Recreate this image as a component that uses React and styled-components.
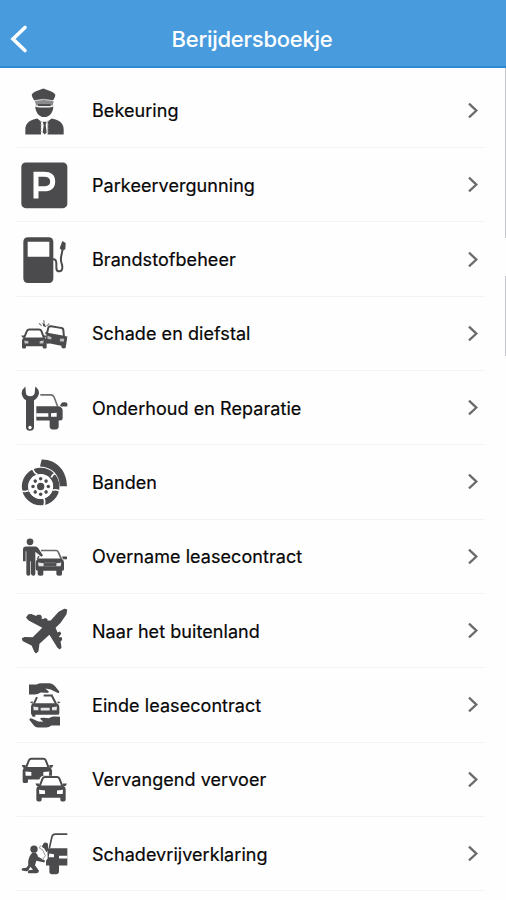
import React from 'react';
import styled, { createGlobalStyle } from 'styled-components';

const GlobalStyle = createGlobalStyle`
  * {
    box-sizing: border-box;
  }

  body {
    background: #fefefe;
    margin: 0;
    overflow: hidden;
  }
`;

const Screen = styled.div`
  color: #060606;
  font-family: Inter, 'Liberation Sans', sans-serif;
  height: 900px;
  overflow: hidden;
  position: relative;
  width: 506px;
`;

const Header = styled.header`
  align-items: center;
  background: #489bdc;
  border-bottom: 2px solid #2d8bd2;
  display: grid;
  grid-template-columns: 60px 1fr 60px;
  height: 68px;
  padding-top: 12px;
`;

const BackButton = styled.button`
  background: none;
  border: 0;
  display: flex;
  height: 32px;
  padding: 0 0 0 8px;
`;

const Title = styled.h1`
  color: #fff;
  font-size: 22px;
  font-weight: 500;
  letter-spacing: -0.25px;
  line-height: 28px;
  margin: 0;
  padding-right: 2px;
  text-align: center;
`;

const List = styled.ul`
  list-style: none;
  margin: 0;
  padding: 5.7px 0 0;
`;

const Row = styled.li`
  align-items: center;
  display: grid;
  grid-template-columns: 72px 1fr 16px;
  height: 74.33px;
  margin: 0 20px 0 10px;
  padding: 0 6px 0 0;
  position: relative;

  &::after {
    background: #f3f3f3;
    bottom: 0;
    content: '';
    height: 1px;
    left: 7px;
    position: absolute;
    right: 1px;
  }
`;

const Label = styled.span`
  -webkit-text-stroke: 0.2px #060606;
  font-size: 18px;
  letter-spacing: 0.06px;
  line-height: 24px;
  padding: 1px 0 0 10px;
  white-space: nowrap;
`;

const IconSvg = styled.svg`
  display: block;
  height: 70px;
  width: 70px;
`;

const ChevronSvg = styled.svg`
  display: block;
  height: 18px;
  justify-self: end;
  width: 14px;
`;

const ScrollMark = styled.div`
  background: #c4c5c8;
  height: ${props => props.size}px;
  position: absolute;
  right: 0;
  top: ${props => props.offset}px;
  width: 1px;
`;

const DARK = '#4b4b4d';

const Icon = ({ shift = 0, children }) => (
  <IconSvg viewBox={`0 ${shift} 210 210`} fill={DARK} aria-hidden="true">
    {children}
  </IconSvg>
);

const OfficerIcon = () => (
  <Icon shift={2.7}>
    <path d="M65 59q5-9 23-14l12-5 12 5q18 5 24 14 0 8-6 16H72q-6-8-7-16z" />
    <path d="M75 78q26-7 56 0l-3 13H78z" fill="#8b8b8d" />
    <path d="M72 77q28-9 58 0" fill="none" stroke="#ccc" strokeWidth="3" />
    <path d="M76 94q7 3 14 3h26q7 0 14-3c0 17-11 32-27 32S76 111 76 94z" />
    <path d="M84 90h38" stroke={DARK} strokeWidth="6" />
    <path d="M46 178v-15c0-16 9-25 24-30l12-3 11 9v39zM161 178v-15c0-16-9-25-24-30l-12-3-12 9v39z" />
    <path d="M98 140h12l-3 10 3 22-6 6-6-6 3-22z" />
    <path d="M94 137v40M113 137v40" stroke="#c4c4c6" strokeWidth="4" strokeDasharray="5 5" />
  </Icon>
);

const ParkingIcon = () => (
  <Icon shift={0.6}>
    <rect x="34" y="38" width="138" height="137" rx="13" />
    <path
      d="M78 146V73h24c17 0 26 8 26 22s-9 22-26 22H79"
      fill="none"
      stroke="#fff"
      strokeWidth="15"
    />
  </Icon>
);

const FuelIcon = () => (
  <Icon>
    <path
      d="M54 37h62q14 0 14 14v109q0 14-14 14H54q-14 0-14-14V51q0-14 14-14zM53 50v45h65V50z"
      fillRule="evenodd"
    />
    <path
      d="M128 103q11-2 11 12v13q0 11 9 11t9-12q0-7-3-15-3-9 1-24l6-34"
      fill="none"
      stroke={DARK}
      strokeWidth="6"
    />
    <path d="M157 48l10 6-1 19-9 4-8-7z" />
  </Icon>
);

const CarFront = ({ transform }) => (
  <g transform={transform}>
    <path
      d="M13 29L22 6Q24 2 29 2h36q5 0 7 4l9 23"
      fill="none"
      stroke={DARK}
      strokeWidth="6"
    />
    <path d="M0 21h12v8H4zM95 21H83v8h8zM11 27h72q8 3 8 11v32q0 5-6 5h-5q-5 0-5-5v-6H19v6q0 5-5 5H9q-6 0-6-5V38q0-8 8-11z" />
    <path d="M11 40l18 2v11H12zM83 40l-18 2v11h17z" fill="#fff" />
  </g>
);

const CrashIcon = () => (
  <Icon shift={-3.6}>
    <path
      d="M42 113l9-21q2-4 7-4h29q5 0 7 4l8 21M110 103l5-20q2-6 8-5l29 5q8 1 8 7l2 22"
      fill="none"
      stroke={DARK}
      strokeWidth="6"
    />
    <path d="M42 112h60q8 2 8 10v19q0 4-4 4h-4q-4 0-4-4v-3H48v3q0 4-4 4h-4q-4 0-4-4v-19q0-8 6-10z" />
    <path d="M43 121l12 2v7H44zM101 121l-12 2v7h11z" fill="#c4c4c6" />
    <path d="M112 98l50 9q10 2 9 10l-4 26q-5 4-12 0l-1-6-34-7-9 1-5-6 4-22z" />
    <path d="M113 107l12 4-2 7-11-2zM163 116l-12-1-2 8 12 2z" fill="#bbb" />
    <path d="M34 106h9v6h-6zM110 106h-9v6h6zM105 96h8v6h-6zM173 109h-9v6h6z" />
    <path
      d="M87 69l8 8M101 60l2 10M118 70l-8 8"
      fill="none"
      stroke="#8f8f91"
      strokeWidth="4"
    />
    <path d="M97 68l8 4 3 9-8-3z" />
  </Icon>
);

const RepairIcon = () => (
  <Icon shift={-2.4}>
    <path d="M46 38q-10 8-11 20 1 14 13 21v82q1 10 12 10t12-10V79q13-7 15-21Q87 46 76 38l-2 20q-3 9-13 9-11 0-13-8z" />
    <circle cx="60" cy="161" r="5" fill="#fff" />
    <path
      d="M91 63h31q7 0 10 6l11 29"
      fill="none"
      stroke="#707072"
      strokeWidth="5"
    />
    <path d="M79 97h68q11 3 11 14v23q0 6-8 6h-4v18q0 8-9 9h-9q-9-1-9-9v-18H79zM150 95l6-9q12-2 16 2v10h-19z" />
    <path d="M79 118h36v11H79zM123 118l17-1v12h-17z" fill="#fff" />
  </Icon>
);

const BrakeIcon = () => (
  <Icon shift={-1.5}>
    <circle cx="92" cy="117" r="47" fill="none" stroke={DARK} strokeWidth="19" />
    <path
      d="M68 61q2 14 14 20M142 76q-14 2-18 14M152 132q-12-8-24-4M102 174q5-14-2-24M30 129q14 6 26 0"
      fill="none"
      stroke="#fff"
      strokeWidth="5"
    />
    <circle cx="92" cy="117" r="37" fill="#fff" />
    <circle cx="92" cy="117" r="11" />
    {[0, 45, 90, 135, 180, 225, 270, 315].map(angle => (
      <circle
        key={angle}
        cx="92"
        cy="94"
        r="5.2"
        transform={`rotate(${angle} 92 117)`}
      />
    ))}
    <path
      d="M87 57c37-1 62 25 62 61h13l-2-62-63-6z"
      fill="#fefefe"
    />
    <path d="M95 36c44-1 76 34 76 80h-22c0-34-22-57-59-59z" />
  </Icon>
);

const HandoverIcon = () => (
  <Icon shift={-0.6}>
    <circle cx="60" cy="59" r="10" />
    <path d="M44 73h32q6 0 9 5l14 22-5 4-18-15v66q0 6-6 6t-7-6v-38h-2v38q0 6-6 6t-6-6V87h-2v30h-8V82q0-9 9-9z" />
    <path
      d="M82 111l5-9M93 85h45q5 0 7 5l9 21"
      fill="none"
      stroke="#68686a"
      strokeWidth="5"
    />
    <path d="M86 109h68q8 4 8 12v20q0 5-6 5v10q0 5-8 5t-9-5v-10h-39v10q0 5-8 5t-9-5v-10q-6 0-6-6v-17q0-10 9-14zM156 103h15v8h-12z" />
    <path d="M84 121l17 2v9H86zM154 121l-15 2v9h13z" fill="#e5e5e5" />
    <path d="M103 122h34M103 132h34" stroke="#77777a" strokeWidth="3" />
  </Icon>
);

const PlaneIcon = () => (
  <Icon shift={-2.4}>
    <path
      d="M164 38L169 40L167 52L151 75L134 92L141 110L149 107L151 111L144 119L147 125L153 123L154 128L149 134L152 151L149 155L144 151L119 110L86 140L83 162L78 167L74 161L67 145L40 131L38 126L45 123L69 124L101 92L57 69L51 62L56 55L63 54L80 61L83 56L90 56L93 60L92 66L101 70L105 66L110 68L110 74L124 73L147 47Z"
      stroke={DARK}
      strokeWidth="5"
      strokeLinejoin="round"
    />
  </Icon>
);

const CareIcon = () => (
  <Icon shift={-1.5}>
    <path d="M57 42h23q6-4 14-4h25q8 0 15 8l14 17q0 6-6 4l-20-10-16-3 11 10q-1 4-9 3l-16-1q-9 6-17 6H57z" />
    <path d="M150 139v26h-26q-7 6-15 6H84q-8 0-13-7l-13-16q0-6 7-4l20 9 15 1-10-9q2-4 11-3l16 1q6-5 14-5z" />
    <path
      d="M72 99l9-19M101 75l27 0M124 73l14 27"
      fill="none"
      stroke={DARK}
      strokeWidth="6"
    />
    <path d="M69 98h71q8 3 8 11v19q0 5-6 5H76v4q-4 4-9 0l-4-8v-18q0-11 6-13zM59 95l9-3v8zM152 95l-9-3v8z" />
    <path d="M70 108l15 2v9H71zM141 108l-15 2v9h14zM92 112h27v8H92z" fill="#e5e5e5" />
  </Icon>
);

const ReplacementIcon = () => (
  <Icon shift={-0.3}>
    <CarFront transform="translate(35 39)" />
    <path d="M83 113l8-16q3-5 9-5h46q5 0 8 5l10 20v51H83z" fill="#fefefe" />
    <CarFront transform="translate(76 94)" />
  </Icon>
);

const InspectIcon = () => (
  <Icon shift={0.6}>
    <path
      d="M118 88l8-35q2-7 10-7h36"
      fill="none"
      stroke={DARK}
      strokeWidth="5"
    />
    <path d="M112 88h60v52h-25v17q0 9-9 9h-12q-8 0-8-9v-17h-10v-14l5-7z" />
    <path d="M118 104l14 2v9h-16zM147 111h25v8h-25z" fill="#fff" />
    <path d="M101 73q6-4 13 2v19l-5 6-6-11-8-5z" />
    <circle cx="72" cy="91" r="11" />
    <path d="M65 103q11-5 17 4l2 7 21 11-2 6-24-5-4 13 12 17q-1 7-7 7H56q-5-3 0-9l13-1-8-9-5 9q-2 5-8 4l-12-2q-3-4 1-7l12-1 6-8q-3-20 10-36z" />
    <path d="M92 80l-4 8 10 5 8 18-10 13" fill="none" stroke="#99999b" strokeWidth="3" />
  </Icon>
);

const Chevron = () => (
  <ChevronSvg viewBox="0 0 14 18" aria-hidden="true">
    <path d="M3 1.6l7.4 7L3 15.4" fill="none" stroke="#6a6a6c" strokeWidth="2.2" />
  </ChevronSvg>
);

const items = [
  { label: 'Bekeuring', icon: OfficerIcon },
  { label: 'Parkeervergunning', icon: ParkingIcon },
  { label: 'Brandstofbeheer', icon: FuelIcon },
  { label: 'Schade en diefstal', icon: CrashIcon },
  { label: 'Onderhoud en Reparatie', icon: RepairIcon },
  { label: 'Banden', icon: BrakeIcon },
  { label: 'Overname leasecontract', icon: HandoverIcon },
  { label: 'Naar het buitenland', icon: PlaneIcon },
  { label: 'Einde leasecontract', icon: CareIcon },
  { label: 'Vervangend vervoer', icon: ReplacementIcon },
  { label: 'Schadevrijverklaring', icon: InspectIcon },
];

const App = () => (
  <>
    <GlobalStyle />
    <Screen>
      <Header>
        <BackButton aria-label="Terug">
          <svg width="24" height="32" viewBox="0 0 24 32">
            <path
              d="M17 4.5L5 16l12 11.5"
              fill="none"
              stroke="#fff"
              strokeWidth="3.6"
              strokeLinecap="round"
            />
          </svg>
        </BackButton>
        <Title>Berijdersboekje</Title>
      </Header>
      <List>
        {items.map(({ label, icon: ItemIcon }) => (
          <Row key={label}>
            <ItemIcon />
            <Label>{label}</Label>
            <Chevron />
          </Row>
        ))}
      </List>
      <ScrollMark offset={68} size={170} />
      <ScrollMark offset={276} size={80} />
    </Screen>
  </>
);

export default App;
